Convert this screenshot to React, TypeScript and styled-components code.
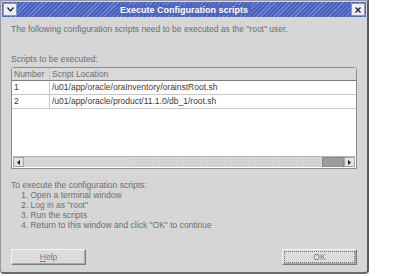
import styled, { createGlobalStyle } from 'styled-components';

const GlobalStyle = createGlobalStyle`
  html, body {
    margin: 0;
    padding: 0;
    background: #ffffff;
  }
  body {
    font-family: 'Liberation Sans', Arial, sans-serif;
  }
`;

const Window = styled.div`
  width: 366px;
  height: 271px;
  background: #d6d6d6;
  border: 1px solid #9a9a9a;
  border-right: 2px solid #5a5a5a;
  border-bottom: 2px solid #6a6a6a;
  border-radius: 0 0 4px 4px;
  display: flex;
  flex-direction: column;
  font-size: 8.5px;
  color: #6e6e6e;
`;

const TitleBar = styled.div`
  height: 15px;
  margin: 1px 1px 0;
  display: flex;
  align-items: center;
  justify-content: space-between;
  padding: 0 1px;
  background: repeating-linear-gradient(-45deg, #4961bb 0 2px, #7188d6 2px 3px);
`;

const TitleText = styled.div`
  color: #ffffff;
  font-weight: bold;
  font-size: 9px;
  background: #4f67c0;
  padding: 0 3px;
`;

const TitleButton = styled.div`
  width: 12px;
  height: 11px;
  background: #eceef4;
  border: 1px solid #8a96c0;
  display: flex;
  align-items: center;
  justify-content: center;
  color: #223;
`;

const Body = styled.div`
  flex: 1;
  display: flex;
  flex-direction: column;
  padding: 7px 10px 0 10px;
`;

const Note = styled.div`
  line-height: 10px;
`;

const Label = styled.div`
  margin-top: 20px;
  line-height: 10px;
`;

const TableBox = styled.div`
  margin-top: 3px;
  height: 100px;
  border: 1px solid #8c8c8c;
  border-radius: 3px 3px 0 0;
  background: #ffffff;
  display: flex;
  flex-direction: column;
  color: #3a3a3a;
`;

const Row = styled.div<{ $head?: boolean }>`
  display: grid;
  grid-template-columns: 38px 1fr;
  height: ${({ $head }) => ($head ? '12px' : '13px')};
  line-height: ${({ $head }) => ($head ? '12px' : '13px')};
  background: ${({ $head }) => ($head ? '#d9d9d9' : '#ffffff')};
  border-bottom: 1px solid ${({ $head }) => ($head ? '#7e7e7e' : '#c8c8c8')};
  color: ${({ $head }) => ($head ? '#6e6e6e' : '#3a3a3a')};
`;

const Cell = styled.div`
  padding-left: 2px;
  border-right: 1px solid #c8c8c8;
  white-space: nowrap;
  overflow: hidden;
  &:last-child {
    border-right: none;
  }
`;

const Filler = styled.div`
  flex: 1;
`;

const ScrollBar = styled.div`
  height: 10px;
  margin: 0 1px 1px;
  display: flex;
  align-items: stretch;
  background: #d2d2d2;
  border-top: 1px solid #b4b4b4;
`;

const Arrow = styled.div`
  width: 9px;
  display: flex;
  align-items: center;
  justify-content: center;
  background: #e2e2e2;
  border: 1px solid #a4a4a4;
`;

const Track = styled.div`
  flex: 1;
  display: flex;
  background: #d6d6d6;
`;

const Grip = styled.div`
  flex: 1;
  margin: 1px 2px 1px 108px;
  background: radial-gradient(circle, #b9b9b9 0.7px, transparent 1px) 0 0 / 3px 3px;
`;

const Thumb = styled.div`
  width: 20px;
  background: #9c9c9c;
  border: 1px solid #8a8a8a;
`;

const Steps = styled.div`
  margin-top: 11px;
  line-height: 10px;
`;

const Step = styled.div`
  padding-left: 10px;
`;

const Footer = styled.div`
  margin-top: auto;
  margin-bottom: 7px;
  display: flex;
  justify-content: space-between;
`;

const Button = styled.div<{ $focus?: boolean }>`
  width: 75px;
  height: 16px;
  box-sizing: border-box;
  display: flex;
  align-items: center;
  justify-content: center;
  background: #dcdcdc;
  border: 1px solid #7c7c7c;
  border-top-color: #f4f4f4;
  border-left-color: #f4f4f4;
  box-shadow: inset -1px -1px 0 #a8a8a8;
  outline: ${({ $focus }) => ($focus ? '1px dotted #707070' : 'none')};
  outline-offset: -3px;
  color: #7a7a7a;
  font-size: 8.5px;
`;

const rows = [
  { n: '1', path: '/u01/app/oracle/oraInventory/orainstRoot.sh' },
  { n: '2', path: '/u01/app/oracle/product/11.1.0/db_1/root.sh' },
];

function App() {
  return (
    <>
      <GlobalStyle />
      <Window>
        <TitleBar>
          <TitleButton>
            <svg width='7' height='5' viewBox='0 0 7 5'>
              <path d='M0.5 0.5 L3.5 4 L6.5 0.5' stroke='#222' strokeWidth='1.2' fill='none' />
            </svg>
          </TitleButton>
          <TitleText>Execute Configuration scripts</TitleText>
          <TitleButton>
            <svg width='6' height='6' viewBox='0 0 6 6'>
              <path d='M0.5 0.5 L5.5 5.5 M5.5 0.5 L0.5 5.5' stroke='#222' strokeWidth='1.3' />
            </svg>
          </TitleButton>
        </TitleBar>
        <Body>
          <Note>The following configuration scripts need to be executed as the "root" user.</Note>
          <Label>Scripts to be executed:</Label>
          <TableBox>
            <Row $head>
              <Cell>Number</Cell>
              <Cell>Script Location</Cell>
            </Row>
            {rows.map((r) => (
              <Row key={r.n}>
                <Cell>{r.n}</Cell>
                <Cell>{r.path}</Cell>
              </Row>
            ))}
            <Filler />
            <ScrollBar>
              <Arrow>
                <svg width='3' height='5' viewBox='0 0 3 5'>
                  <path d='M3 0 L0 2.5 L3 5 Z' fill='#222' />
                </svg>
              </Arrow>
              <Track>
                <Grip />
                <Thumb />
              </Track>
              <Arrow>
                <svg width='3' height='5' viewBox='0 0 3 5'>
                  <path d='M0 0 L3 2.5 L0 5 Z' fill='#222' />
                </svg>
              </Arrow>
            </ScrollBar>
          </TableBox>
          <Steps>
            <div>To execute the configuration scripts:</div>
            <Step>1. Open a terminal window</Step>
            <Step>2. Log in as "root"</Step>
            <Step>3. Run the scripts</Step>
            <Step>4. Return to this window and click "OK" to continue</Step>
          </Steps>
          <Footer>
            <Button>
              <span>
                <u>H</u>elp
              </span>
            </Button>
            <Button $focus>OK</Button>
          </Footer>
        </Body>
      </Window>
    </>
  );
}

export default App;
